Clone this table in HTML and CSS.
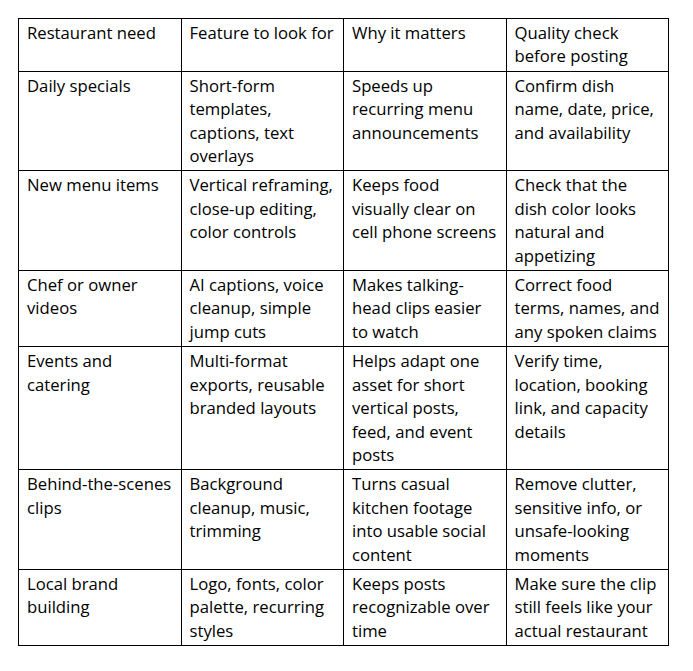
FILE: index.html
```html
<!DOCTYPE html>
<html>
<head>
<meta charset="utf-8">
<link rel="stylesheet" href="styles.css">
</head>
<body>
<table class="grid">
  <colgroup><col class="c"><col class="c"><col class="c"><col class="c"></colgroup>
  <tr><td>Restaurant need</td><td>Feature to look for</td><td>Why it matters</td><td>Quality check before posting</td></tr>
  <tr><td>Daily specials</td><td>Short-form templates, captions, text overlays</td><td>Speeds up recurring menu announcements</td><td>Confirm dish name, date, price, and availability</td></tr>
  <tr><td>New menu items</td><td>Vertical reframing, close-up editing, color controls</td><td>Keeps food visually clear on cell phone screens</td><td>Check that the dish color looks natural and appetizing</td></tr>
  <tr><td>Chef or owner videos</td><td>AI captions, voice cleanup, simple jump cuts</td><td>Makes talking-head clips easier to watch</td><td>Correct food terms, names, and any spoken claims</td></tr>
  <tr><td>Events and catering</td><td>Multi-format exports, reusable branded layouts</td><td>Helps adapt one asset for short vertical posts, feed, and event posts</td><td>Verify time, location, booking link, and capacity details</td></tr>
  <tr><td>Behind-the-scenes clips</td><td>Background cleanup, music, trimming</td><td>Turns casual kitchen footage into usable social content</td><td>Remove clutter, sensitive info, or unsafe-looking moments</td></tr>
  <tr><td>Local brand building</td><td>Logo, fonts, color palette, recurring styles</td><td>Keeps posts recognizable over time</td><td>Make sure the clip still feels like your actual restaurant</td></tr>
</table>
</body>
</html>
```
FILE: styles.css
```css
html, body { background: #fff; }
body { margin: 18px; font-family: "Open Sans", sans-serif; color: #000; }
.grid { border-collapse: collapse; width: 651px; table-layout: fixed; }
.grid td {
  border: 1px solid #000;
  vertical-align: top;
  padding: 2px 8px 3px 8px;
  font-size: 16.7px;
  line-height: 23.4px;
}
```
